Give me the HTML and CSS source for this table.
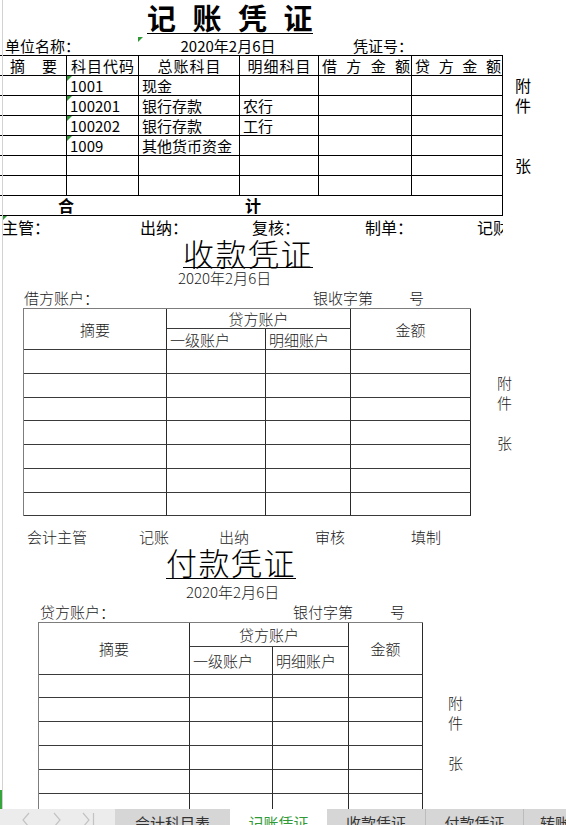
FILE: index.html
```html
<!DOCTYPE html>
<html lang="zh-CN">
<head>
<meta charset="utf-8">
<title>记账凭证</title>
<link rel="stylesheet" href="styles.css">
</head>
<body>
<div class="sheet">
  <section class="jz">
    <div class="jz-title"><h1 class="jz-h"><span>记</span> <span>账</span> <span>凭</span> <span>证</span></h1></div>
    <div class="jz-info">
      <span class="info-unit">单位名称：</span>
      <span class="info-date mark">2020年2月6日</span>
      <span class="info-no">凭证号：</span>
    </div>
    <div class="jz-body">
      <div class="g1">
        <div class="c spread sp-a"><span>摘</span> <span>要</span></div>
        <div class="c ctr">科目代码</div>
        <div class="c ctr">总账科目</div>
        <div class="c ctr">明细科目</div>
        <div class="c spread sp-b"><span>借</span> <span>方</span> <span>金</span> <span>额</span></div>
        <div class="c spread sp-b"><span>贷</span> <span>方</span> <span>金</span> <span>额</span></div>

        <div class="c"></div><div class="c mark">1001</div><div class="c">现金</div><div class="c"></div><div class="c"></div><div class="c"></div>
        <div class="c"></div><div class="c mark">100201</div><div class="c">银行存款</div><div class="c">农行</div><div class="c"></div><div class="c"></div>
        <div class="c"></div><div class="c mark">100202</div><div class="c">银行存款</div><div class="c">工行</div><div class="c"></div><div class="c"></div>
        <div class="c"></div><div class="c mark">1009</div><div class="c">其他货币资金</div><div class="c"></div><div class="c"></div><div class="c"></div>
        <div class="c"></div><div class="c"></div><div class="c"></div><div class="c"></div><div class="c"></div><div class="c"></div>
        <div class="c"></div><div class="c"></div><div class="c"></div><div class="c"></div><div class="c"></div><div class="c"></div>

        <div class="c total"><span class="he">合</span><span class="ji">计</span></div>
      </div>
      <div class="side side1"><span>附</span><span>件</span><span class="zh">张</span></div>
    </div>
    <div class="jz-sign mark mark-s">
      <span class="s-a">主管：</span><span class="s-b">出纳：</span><span class="s-c">复核：</span><span class="s-d">制单：</span><span class="s-e">记财</span>
    </div>
  </section>

  <section class="sk">
    <div class="v-title t2"><h2>收款凭证</h2></div>
    <div class="v-date d2">2020年2月6日</div>
    <div class="v-acct a2"><span class="acct">借方账户：</span><span class="vno">银收字第</span><span class="hao">号</span></div>
    <div class="v-body">
      <div class="g g2">
        <div class="c zy">摘要</div>
        <div class="c df">贷方账户</div>
        <div class="c je">金额</div>
        <div class="c sub">一级账户</div>
        <div class="c sub">明细账户</div>
        <div class="c"></div><div class="c"></div><div class="c"></div><div class="c"></div>
        <div class="c"></div><div class="c"></div><div class="c"></div><div class="c"></div>
        <div class="c"></div><div class="c"></div><div class="c"></div><div class="c"></div>
        <div class="c"></div><div class="c"></div><div class="c"></div><div class="c"></div>
        <div class="c"></div><div class="c"></div><div class="c"></div><div class="c"></div>
        <div class="c"></div><div class="c"></div><div class="c"></div><div class="c"></div>
        <div class="c"></div><div class="c"></div><div class="c"></div><div class="c"></div>
      </div>
      <div class="side side2"><span>附</span><span>件</span><span class="zh">张</span></div>
    </div>
    <div class="v-sign"><span class="p1">会计主管</span><span class="p2">记账</span><span class="p3">出纳</span><span class="p4">审核</span><span class="p5">填制</span></div>
  </section>

  <section class="fk">
    <div class="v-title t3"><h2>付款凭证</h2></div>
    <div class="v-date d3">2020年2月6日</div>
    <div class="v-acct a3"><span class="acct">贷方账户：</span><span class="vno">银付字第</span><span class="hao">号</span></div>
    <div class="v-body">
      <div class="g g3">
        <div class="c zy">摘要</div>
        <div class="c df">贷方账户</div>
        <div class="c je">金额</div>
        <div class="c sub">一级账户</div>
        <div class="c sub">明细账户</div>
        <div class="c"></div><div class="c"></div><div class="c"></div><div class="c"></div>
        <div class="c"></div><div class="c"></div><div class="c"></div><div class="c"></div>
        <div class="c"></div><div class="c"></div><div class="c"></div><div class="c"></div>
        <div class="c"></div><div class="c"></div><div class="c"></div><div class="c"></div>
        <div class="c"></div><div class="c"></div><div class="c"></div><div class="c"></div>
        <div class="c"></div><div class="c"></div><div class="c"></div><div class="c"></div>
      </div>
      <div class="side side3"><span>附</span><span>件</span><span class="zh">张</span></div>
    </div>
  </section>
</div>

<div class="edge"></div>
<div class="scroll-mark"></div>

<div class="tabbar">
  <svg class="nav" width="115" height="16" viewBox="0 0 115 16">
    <polyline points="29,4 23,11 29,18" />
    <polyline points="54,4 60,11 54,18" />
    <polyline points="83,4 89,11 83,18" />
    <line x1="93.5" y1="4" x2="93.5" y2="18" />
  </svg>
  <div class="tab t-a">会计科目表</div>
  <div class="tab active t-b">记账凭证</div>
  <div class="tab t-c">收款凭证</div>
  <div class="tab t-d">付款凭证</div>
  <div class="tab t-e">转账凭证</div>
</div>
</body>
</html>
```

FILE: styles.css
```css
* { box-sizing: border-box; }
html, body { margin: 0; padding: 0; background: #fff; }
body {
  width: 566px;
  height: 825px;
  overflow: hidden;
  font-family: "Noto Sans CJK SC", "Noto Sans", sans-serif;
  font-size: 15px;
  font-weight: 300;
  color: #000;
}
.sheet { width: 566px; }

/* green comment markers */
.mark { position: relative; }
.mark::before {
  content: "";
  position: absolute;
  left: 0;
  top: 0;
  width: 0;
  height: 0;
  border-top: 5px solid #2f9a35;
  border-right: 5px solid transparent;
}
.mark-s::before { left: 2px; }

/* ---------- 记账凭证 ---------- */
.jz { font-weight: 400; }
.jz-title { display: flex; align-items: flex-start; height: 37px; padding-left: 147px; }
.jz-h {
  margin: 1px 0 0;
  display: flex;
  gap: 16.5px;
  font-size: 29px;
  font-weight: 700;
  line-height: 32px;
  border-bottom: 1px solid #000;
}
.jz-info { display: flex; height: 18px; line-height: 18px; font-size: 15px; white-space: nowrap; }
.info-unit { width: 138px; padding-left: 5px; flex: none; }
.info-date { width: 180px; text-align: center; flex: none; }
.info-no { padding-left: 35px; }

.jz-body { display: flex; align-items: flex-start; }
.g1 {
  flex: none;
  width: 503px;
  display: grid;
  grid-template-columns: 67px 72px 101px 79px 93px 91px;
  grid-auto-rows: 20px;
  border-top: 1px solid #000;
}
.g1 .c {
  border-right: 1px solid #000;
  border-bottom: 1px solid #000;
  padding-left: 3px;
  line-height: 19px;
  white-space: nowrap;
}
.g1 .ctr { text-align: center; padding-left: 1px; letter-spacing: 1px; }
.spread { display: flex; justify-content: space-between; }
.g1 .sp-a { padding: 0 9px 0 10px; }
.g1 .sp-b { padding: 0 1px 0 3px; }
.g1 .total {
  grid-column: 1 / -1;
  display: flex;
  font-size: 16px;
  font-weight: 700;
  padding-left: 58px;
}
.total .ji { margin-left: 171px; }

.side { display: flex; flex-direction: column; flex: none; }
.side1 { margin-left: 12px; padding-top: 20px; font-size: 16px; line-height: 20px; }
.side1 .zh { margin-top: 40px; }

.jz-sign {
  display: flex;
  width: 503px;
  height: 22px;
  line-height: 22px;
  font-size: 16px;
  white-space: nowrap;
  overflow: hidden;
}
.jz-sign span { flex: none; }
.s-a { width: 140px; padding-left: 2px; }
.s-b { width: 112px; }
.s-c { width: 113px; }
.s-d { width: 112px; }

/* ---------- 收款 / 付款凭证 ---------- */
.sk, .fk { color: #1a1a1a; }
.v-title { display: flex; align-items: flex-start; }
.v-title h2 {
  margin: 0;
  font-size: 31px;
  font-weight: 300;
  letter-spacing: 1.5px;
  line-height: 29px;
  color: #000;
  border-bottom: 1px solid #000;
}
.t2 { height: 31px; padding-left: 183px; }
.t3 { height: 35px; padding-left: 166px; }
.t3 h2 { padding-bottom: 2px; }

.v-date { font-size: 15px; white-space: nowrap; }
.d2 { height: 18px; line-height: 18px; padding-left: 178px; }
.d3 { height: 20px; line-height: 20px; padding-left: 186px; }

.v-acct { display: flex; font-size: 15px; white-space: nowrap; }
.v-acct span { flex: none; }
.a2 { height: 21px; line-height: 21px; }
.a2 .acct { margin-left: 24px; width: 289px; }
.a2 .vno { width: 96px; }
.a3 { height: 20px; line-height: 20px; }
.a3 .acct { margin-left: 40px; width: 253px; }
.a3 .vno { width: 97px; }

.v-body { display: flex; align-items: flex-start; }
.g {
  flex: none;
  display: grid;
  border-top: 1px solid #7d7d7d;
  border-left: 1px solid #7d7d7d;
  font-size: 15px;
}
.g .c {
  border-right: 1px solid #2a2a2a;
  border-bottom: 1px solid #3a3a3a;
  white-space: nowrap;
}
.g .zy, .g .je { grid-row: span 2; display: flex; align-items: center; justify-content: center; }
.g .df { grid-column: span 2; display: flex; align-items: center; justify-content: center; }
.g .sub { display: flex; align-items: center; padding-left: 3px; }

.g2 {
  margin-left: 23px;
  grid-template-columns: 143px 99px 85px 120px;
  grid-template-rows: 20px 21px 24px 24px 23px 24px 24px 24px 23px;
}
.g3 {
  margin-left: 38px;
  grid-template-columns: 151px 83px 76px 74px;
  grid-template-rows: 24px 28px 23px 24px 24px 24px 24px 24px;
}

.side2, .side3 { font-size: 15px; line-height: 20px; color: #222; }
.side2 { margin-left: 26px; padding-top: 65px; }
.side3 { margin-left: 25px; padding-top: 71px; }
.side2 .zh, .side3 .zh { margin-top: 20px; }

.v-sign {
  display: flex;
  height: 31px;
  padding-top: 10px;
  line-height: 21px;
  font-size: 15px;
  white-space: nowrap;
  color: #222;
}
.v-sign span { flex: none; }
.p1 { margin-left: 27px; width: 112px; }
.p2 { width: 80px; }
.p3 { width: 96px; }
.p4 { width: 96px; }

/* ---------- window chrome ---------- */
.edge { position: fixed; left: 2px; top: 0; width: 1px; height: 809px; background: #d2d2d2; }
.scroll-mark { position: fixed; left: 0; top: 790px; width: 2px; height: 19px; background: #36a53c; }

.tabbar {
  position: fixed;
  left: 0;
  top: 809px;
  width: 566px;
  height: 16px;
  display: flex;
  overflow: hidden;
  background: #ececec;
  font-size: 15px;
  font-weight: 400;
  line-height: 28px;
  color: #333;
  white-space: nowrap;
}
.nav { flex: none; display: block; }
.nav polyline, .nav line { fill: none; stroke: #c3c3c3; stroke-width: 1.2; }
.tab { flex: none; text-align: center; background: #d6d6d6; border-right: 1px solid #bcbcbc; }
.tab.active { background: #fff; color: #2f9a35; border-right: none; }
.t-a { width: 115px; border-right: none; }
.t-b { width: 97px; }
.t-c { width: 99px; }
.t-d { width: 98px; }
.t-e { width: 80px; text-align: left; padding-left: 16px; }
```
